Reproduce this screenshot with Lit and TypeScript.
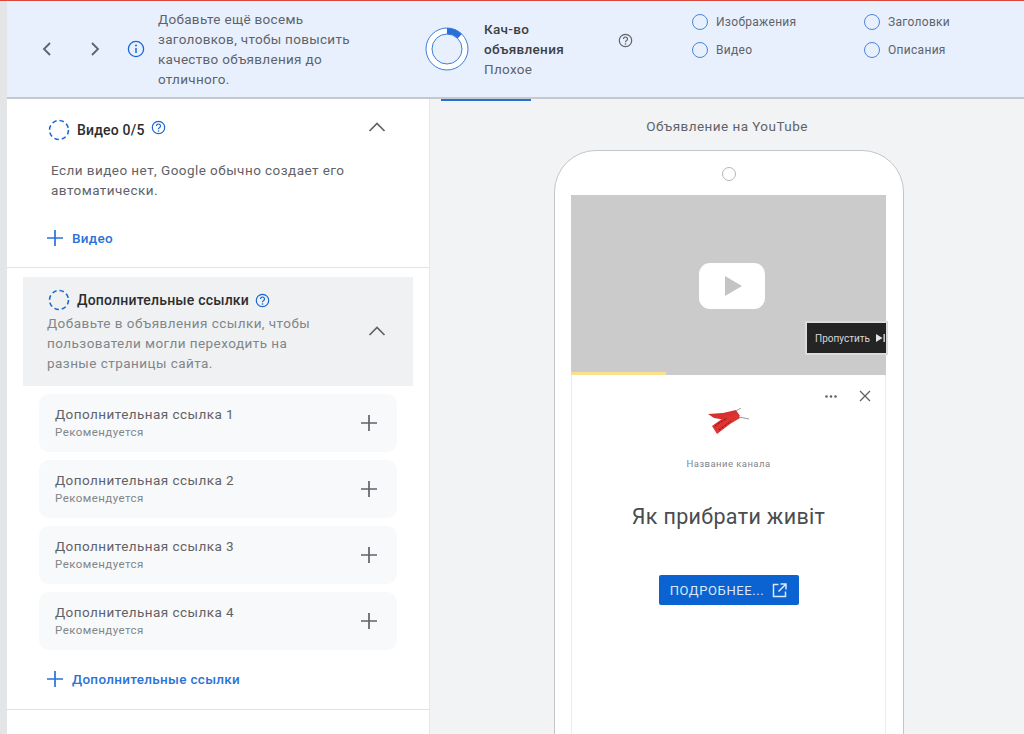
import { LitElement, html, css, svg } from 'lit';
import { customElement } from 'lit/decorators.js';

const linkRows = [1, 2, 3, 4];

const help = (color: string) => html`
  <svg class="help" width="15" height="15" viewBox="0 0 15 15" fill="none">
    <circle cx="7.5" cy="7.5" r="6.2" stroke=${color} stroke-width="1.2"></circle>
    <path d="M5.5 6a2 2 0 1 1 3.2 1.6c-.8.5-1.2.9-1.2 1.7" stroke=${color} stroke-width="1.2"></path>
    <circle cx="7.5" cy="11" r=".8" fill=${color}></circle>
  </svg>
`;

const dashedRing = html`
  <svg class="ring" width="22" height="22" viewBox="0 0 22 22" fill="none">
    <circle cx="11" cy="11" r="9.5" stroke="#1a66d2" stroke-width="1.6" stroke-dasharray="4.5 3"></circle>
  </svg>
`;

const chevronUp = html`
  <svg width="18" height="10" viewBox="0 0 18 10" fill="none">
    <path d="M1.5 9 9 1.5 16.5 9" stroke="#5f6368" stroke-width="1.7"></path>
  </svg>
`;

const plus = (color: string) => html`
  <svg width="16" height="16" viewBox="0 0 16 16" fill="none">
    <path d="M8 0v16M0 8h16" stroke=${color} stroke-width="1.7"></path>
  </svg>
`;

// two red chillies with grey stems
const chili = svg`
  <path d="M0 6 15 5 28 2 32 8 18 12 6 10Z" fill="#d8302f"></path>
  <path d="M9 26 4 18 18 8 30 6 32 10 22 16Z" fill="#dd3331"></path>
  <path d="M7 18 19 10M11 22 23 13" stroke="#6b1414" stroke-width="1" stroke-dasharray="2 1.5"></path>
  <path d="M28 3 33 0M31 9 41 11" stroke="#9a9a9a" stroke-width="1"></path>
`;

@customElement('app-root')
export class AppRoot extends LitElement {
  static override styles = css`
    :host {
      display: flex;
      flex-direction: column;
      height: 734px;
      overflow: hidden;
      background: #e4e5e6;
      font-family: Roboto, "Noto Sans", sans-serif;
      color: #5f6368;
      letter-spacing: 0.45px;
    }
    .redline {
      height: 1px;
      flex: none;
      background: #d9483b;
    }
    .banner {
      flex: none;
      height: 98px;
      margin-left: 7px;
      display: flex;
      align-items: center;
      background: #e8f0fe;
      border-bottom: 2px solid #c5c8cc;
      box-sizing: border-box;
      font-size: 13.5px;
      line-height: 20px;
      letter-spacing: 0.3px;
    }
    .nav {
      display: flex;
      align-items: center;
      gap: 36px;
      margin-left: 34px;
    }
    .info {
      margin-left: 26px;
      flex: none;
    }
    .tip {
      width: 200px;
      margin: -1px 0 0 13px;
      flex: none;
    }
    .score-ring {
      margin-left: 67px;
      flex: none;
    }
    .score {
      width: 90px;
      margin: -1px 0 0 15px;
      flex: none;
    }
    .score b {
      display: block;
      font-weight: 500;
      color: #3c4043;
    }
    .score-help {
      align-self: flex-start;
      margin-top: 32px;
      margin-left: 44px;
      flex: none;
    }
    .checks {
      align-self: flex-start;
      margin-top: 11px;
      margin-left: 59px;
      display: grid;
      grid-template-columns: 172px 120px;
      row-gap: 8px;
      font-size: 12px;
    }
    .check {
      display: flex;
      align-items: center;
      gap: 8px;
      height: 20px;
    }
    .dot {
      width: 16px;
      height: 16px;
      box-sizing: border-box;
      border: 1.3px solid #4a86dc;
      border-radius: 50%;
    }
    .main {
      flex: 1;
      min-height: 0;
      margin-left: 7px;
      display: flex;
    }
    .left {
      width: 423px;
      flex: none;
      background: #fff;
      border-right: 1px solid #e6e7e8;
      box-sizing: border-box;
      font-size: 13.5px;
      line-height: 20px;
    }
    .section-video {
      height: 169px;
      box-sizing: border-box;
      padding: 19px 0 0 40px;
      border-bottom: 1px solid #e0e2e4;
    }
    .heading {
      display: flex;
      align-items: center;
      gap: 7px;
      color: #2b2d30;
      font-weight: 500;
      font-size: 14px;
      letter-spacing: 0.2px;
    }
    .heading .ring {
      margin-left: 1px;
    }
    .heading .help {
      margin-left: -1px;
    }
    .video-head {
      display: flex;
      justify-content: space-between;
      align-items: center;
      padding-right: 43px;
      height: 24px;
    }
    .video-head svg:last-child {
      margin-top: -6px;
    }
    .video-text {
      margin: 18px 0 0 4px;
      width: 310px;
    }
    .add {
      display: flex;
      align-items: center;
      gap: 9px;
      color: #2a72d8;
      font-weight: 500;
      font-size: 13.5px;
      letter-spacing: 0.3px;
    }
    .video-add {
      margin-top: 28px;
    }
    .section-links {
      padding: 9px 0 0 0;
      height: 442px;
      box-sizing: border-box;
      border-bottom: 1px solid #e0e2e4;
    }
    .links-head {
      margin: 0 16px;
      height: 109px;
      box-sizing: border-box;
      background: #f0f1f2;
      padding: 12px 26px 0 24px;
      display: flex;
      justify-content: space-between;
      align-items: center;
    }
    .links-body {
      align-self: flex-start;
    }
    .links-text {
      margin-top: 2px;
      width: 275px;
      color: #80868b;
    }
    .links-head > svg {
      margin-top: -14px;
      margin-right: 1px;
    }
    .rows {
      margin: 8px 32px 0 32px;
      display: flex;
      flex-direction: column;
      gap: 8px;
    }
    .row {
      height: 58px;
      box-sizing: border-box;
      background: #f8f9fa;
      border-radius: 10px;
      padding: 0 20px 0 16px;
      display: flex;
      align-items: center;
      justify-content: space-between;
    }
    .row > div {
      margin-top: -2px;
    }
    .row small {
      display: block;
      font-size: 11.5px;
      line-height: 16px;
      color: #80868b;
    }
    .row span {
      display: block;
      line-height: 19px;
    }
    .links-add {
      margin: 19px 0 0 40px;
    }
    .right {
      flex: 1;
      position: relative;
      background: #f1f3f4;
      display: flex;
      flex-direction: column;
      align-items: center;
      padding-left: 4px;
      font-size: 13.5px;
      overflow: hidden;
    }
    .tab-line {
      position: absolute;
      left: 11px;
      top: 0;
      width: 90px;
      height: 2px;
      background: #2a6fd0;
    }
    .preview-title {
      margin: 17px 4px 0 0;
      line-height: 20px;
    }
    .phone {
      margin-top: 14px;
      width: 350px;
      flex: none;
      height: 640px;
      box-sizing: border-box;
      background: #fff;
      border: 1.5px solid #c4c5c6;
      border-radius: 42px 42px 0 0;
      padding: 0 17px 0 16px;
      display: flex;
      flex-direction: column;
    }
    .camera {
      align-self: center;
      width: 14px;
      height: 14px;
      box-sizing: border-box;
      margin: 16px 0 14px;
      border: 1px solid #b5b6b7;
      border-radius: 50%;
      flex: none;
    }
    .video {
      position: relative;
      height: 180px;
      flex: none;
      background: #cbcbcb;
      display: flex;
      align-items: center;
      justify-content: center;
    }
    .play {
      margin: 2px 0 0 6px;
    }
    .progress {
      position: absolute;
      left: 0;
      bottom: 0;
      width: 95px;
      height: 3px;
      background: #fbe08e;
    }
    .skip {
      position: absolute;
      right: 0;
      top: 128px;
      width: 79px;
      height: 30px;
      box-sizing: border-box;
      padding-left: 8px;
      background: #242424;
      box-shadow: 0 0 0 2px #dcdcdc;
      color: #d8d8d8;
      font-size: 10px;
      letter-spacing: 0;
      display: flex;
      align-items: center;
      gap: 6px;
    }
    .card {
      flex: 1;
      border-left: 1px solid #ececec;
      border-right: 1px solid #ececec;
      display: flex;
      flex-direction: column;
      align-items: center;
      position: relative;
    }
    .card-tools {
      position: absolute;
      top: 15px;
      right: 14px;
      display: flex;
      align-items: center;
      gap: 22px;
    }
    .logo {
      margin-top: 33px;
    }
    .channel {
      margin-top: 23px;
      font-size: 9.5px;
      line-height: 14px;
      color: #80868b;
    }
    .headline {
      margin-top: 30px;
      font-size: 21.5px;
      line-height: 32px;
      color: #4a4c4f;
      letter-spacing: 0.35px;
    }
    .cta {
      margin-top: 42px;
      width: 140px;
      height: 30px;
      box-sizing: border-box;
      background: #0b63d1;
      border-radius: 2px;
      color: #dbe8fa;
      font-size: 13px;
      letter-spacing: 0.6px;
      display: flex;
      align-items: center;
      justify-content: center;
      gap: 8px;
    }
  `;

  override render() {
    return html`
      <div class="redline"></div>
      <div class="banner">
        <div class="nav">
          <svg width="12" height="16" viewBox="0 0 12 16" fill="none"><path d="M9 2 3 8l6 6" stroke="#5f6368" stroke-width="1.8"></path></svg>
          <svg width="12" height="16" viewBox="0 0 12 16" fill="none"><path d="m3 2 6 6-6 6" stroke="#5f6368" stroke-width="1.8"></path></svg>
        </div>
        <svg class="info" width="18" height="18" viewBox="0 0 18 18" fill="none">
          <circle cx="9" cy="9" r="7.6" stroke="#1a66d2" stroke-width="1.3"></circle>
          <path d="M9 8v5" stroke="#1a66d2" stroke-width="1.5"></path>
          <circle cx="9" cy="5.6" r="1" fill="#1a66d2"></circle>
        </svg>
        <div class="tip">Добавьте ещё восемь заголовков, чтобы повысить качество объявления до отличного.</div>
        <svg class="score-ring" width="44" height="44" viewBox="0 0 44 44" fill="none">
          <circle cx="22" cy="22" r="21" fill="#fff" stroke="#3b7fdc" stroke-width="1"></circle>
          <circle cx="22" cy="22" r="15" fill="#e8f0fe" stroke="#3b7fdc" stroke-width="1"></circle>
          <path d="M22 1a21 21 0 0 1 14.8 6.1L32.6 11.4A15 15 0 0 0 22 7Z" fill="#2a6fd8"></path>
        </svg>
        <div class="score"><b>Кач-во объявления</b>Плохое</div>
        <div class="score-help">${help('#5f6368')}</div>
        <div class="checks">
          <div class="check"><div class="dot"></div>Изображения</div>
          <div class="check"><div class="dot"></div>Заголовки</div>
          <div class="check"><div class="dot"></div>Видео</div>
          <div class="check"><div class="dot"></div>Описания</div>
        </div>
      </div>
      <div class="main">
        <div class="left">
          <div class="section-video">
            <div class="video-head">
              <div class="heading">${dashedRing}Видео 0/5 ${help('#1a66d2')}</div>
              ${chevronUp}
            </div>
            <div class="video-text">Если видео нет, Google обычно создает его автоматически.</div>
            <div class="add video-add">${plus('#2a72d8')}Видео</div>
          </div>
          <div class="section-links">
            <div class="links-head">
              <div class="links-body">
                <div class="heading">${dashedRing}Дополнительные ссылки ${help('#1a66d2')}</div>
                <div class="links-text">Добавьте в объявления ссылки, чтобы пользователи могли переходить на разные страницы сайта.</div>
              </div>
              ${chevronUp}
            </div>
            <div class="rows">
              ${linkRows.map(
                (n) => html`
                  <div class="row">
                    <div><span>Дополнительная ссылка ${n}</span><small>Рекомендуется</small></div>
                    ${plus('#5f6368')}
                  </div>
                `
              )}
            </div>
            <div class="add links-add">${plus('#2a72d8')}Дополнительные ссылки</div>
          </div>
        </div>
        <div class="right">
          <div class="tab-line"></div>
          <div class="preview-title">Объявление на YouTube</div>
          <div class="phone">
            <div class="camera"></div>
            <div class="video">
              <svg class="play" width="68" height="48" viewBox="0 0 68 48">
                <rect x="1" y="1" width="66" height="46" rx="11" fill="#fff"></rect>
                <path d="M27 14 44 24 27 34Z" fill="#c4c4c4"></path>
              </svg>
              <div class="progress"></div>
              <div class="skip">Пропустить
                <svg width="9" height="8" viewBox="0 0 9 8"><path d="M0 0 6.5 4 0 8Z" fill="#e4e4e4"></path><path d="M7.5 0h1.3v8H7.5Z" fill="#e4e4e4"></path></svg>
              </div>
            </div>
            <div class="card">
              <div class="card-tools">
                <svg width="12" height="3" viewBox="0 0 12 3" fill="#5f6368"><circle cx="1.5" cy="1.5" r="1.3"></circle><circle cx="6" cy="1.5" r="1.3"></circle><circle cx="10.5" cy="1.5" r="1.3"></circle></svg>
                <svg width="12" height="12" viewBox="0 0 12 12" fill="none"><path d="m1 1 10 10M11 1 1 11" stroke="#5f6368" stroke-width="1.3"></path></svg>
              </div>
              <svg class="logo" width="42" height="26" viewBox="0 0 42 26" fill="none">${chili}</svg>
              <div class="channel">Название канала</div>
              <div class="headline">Як прибрати живіт</div>
              <div class="cta">ПОДРОБНЕЕ...
                <svg width="15" height="15" viewBox="0 0 15 15" fill="none">
                  <path d="M6.5 1.5H1.5v12h12V8.5M8.5 1h5.5v5.5M14 1 6.5 8.5" stroke="#dbe8fa" stroke-width="1.5"></path>
                </svg>
              </div>
            </div>
          </div>
        </div>
      </div>
    `;
  }
}

declare global {
  interface HTMLElementTagNameMap {
    'app-root': AppRoot;
  }
}
